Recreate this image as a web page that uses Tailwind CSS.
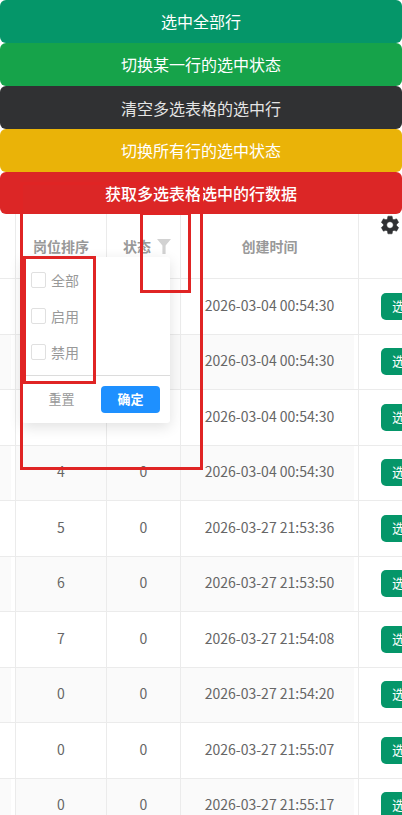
<!DOCTYPE html>
<html lang="zh-CN">
<head>
<meta charset="utf-8">
<script src="https://cdn.jsdelivr.net/npm/@tailwindcss/browser@4"></script>
<title>Table</title>
</head>
<body class="relative h-[815px] w-[402px] overflow-hidden bg-white font-['Noto_Sans_CJK_SC','Noto_Sans',sans-serif]">
<div class="flex flex-col text-center text-base text-white">
  <div class="flex h-[43px] items-center justify-center rounded-md bg-[#059669] pb-[2px]">选中全部行</div>
  <div class="flex h-[43px] items-center justify-center rounded-md bg-[#16a34a] pb-[2px]">切换某一行的选中状态</div>
  <div class="flex h-[43px] items-center justify-center rounded-md bg-[#303133] text-[#e4e4e4]">清空多选表格的选中行</div>
  <div class="flex h-[43px] items-center justify-center rounded-md bg-[#eab308] pb-[2px]">切换所有行的选中状态</div>
  <div class="flex h-[42px] items-center justify-center rounded-md bg-[#dc2626] font-medium">获取多选表格选中的行数据</div>
</div>

<div class="text-sm text-[#666666]">
  <div class="flex h-[65px] border-b border-[#ebebeb] font-bold text-[#999999]">
    <div class="w-[16px] border-r border-[#ebebeb]"></div>
    <div class="flex w-[91px] items-center justify-center border-r border-[#ebebeb]">岗位排序</div>
    <div class="flex w-[74px] items-center justify-start gap-[6px] border-r border-[#ebebeb] pl-[16px]">状态
      <svg class="h-[15px] w-[14px]" viewBox="0 0 14 15"><path fill="#d2d2d2" d="M0 0h14L8.6 6.5V15H5.4V6.5z"/></svg>
    </div>
    <div class="flex w-[178px] items-center justify-center border-r border-[#ebebeb]">创建时间</div>
    <div class="relative w-[43px]"><svg class="absolute top-[0px] left-[20px] h-[22px] w-[22px]" viewBox="0 0 24 24"><path fill="#303133" stroke="#303133" stroke-width="0.6" d="M19.14 12.94c.04-.3.06-.61.06-.94 0-.32-.02-.64-.07-.94l2.03-1.58a.49.49 0 0 0 .12-.61l-1.92-3.32a.488.488 0 0 0-.59-.22l-2.39.96c-.5-.38-1.03-.7-1.62-.94l-.36-2.54a.484.484 0 0 0-.48-.41h-3.84c-.24 0-.43.17-.47.41l-.36 2.54c-.59.24-1.13.57-1.62.94l-2.39-.96c-.22-.08-.47 0-.59.22L2.74 8.87c-.12.21-.08.47.12.61l2.03 1.58c-.05.3-.09.63-.09.94s.02.64.07.94l-2.03 1.58a.49.49 0 0 0-.12.61l1.92 3.32c.12.22.37.29.59.22l2.39-.96c.5.38 1.03.7 1.62.94l.36 2.54c.05.24.24.41.48.41h3.84c.24 0 .44-.17.47-.41l.36-2.54c.59-.24 1.13-.56 1.62-.94l2.39.96c.22.08.47 0 .59-.22l1.92-3.32c.12-.22.07-.47-.12-.61l-2.01-1.58zM12 15.6c-1.98 0-3.6-1.62-3.6-3.6s1.62-3.6 3.6-3.6 3.6 1.62 3.6 3.6-1.62 3.6-3.6 3.6z"/></svg></div>
  </div>

  <div class="flex h-[55.5px] items-stretch border-b border-[#ebebeb]">
    <div class="w-[16px] border-r border-[#ebebeb]"></div>
    <div class="w-[91px] border-r border-[#ebebeb]"></div>
    <div class="w-[74px] border-r border-[#ebebeb]"></div>
    <div class="flex w-[178px] items-center justify-center border-r border-[#ebebeb] pb-[3px]">2026-03-04 00:54:30</div>
    <div class="flex w-[43px] items-center overflow-hidden pl-[22px]"><span class="flex h-[27px] w-[60px] shrink-0 items-center rounded-[5px] bg-[#059669] pl-[11px] text-[13px] text-white">选中</span></div>
  </div>
  <div class="flex h-[55.5px] items-stretch border-b border-[#ebebeb] bg-[#fafafa]">
    <div class="w-[16px] border-r border-[#ebebeb] shadow-[inset_-4px_0_0_#fff]"></div>
    <div class="w-[91px] border-r border-[#ebebeb]"></div>
    <div class="w-[74px] border-r border-[#ebebeb]"></div>
    <div class="flex w-[178px] items-center justify-center border-r border-[#ebebeb] pb-[3px] shadow-[inset_-4px_0_0_#fff]">2026-03-04 00:54:30</div>
    <div class="flex w-[43px] items-center overflow-hidden bg-white pl-[22px]"><span class="flex h-[27px] w-[60px] shrink-0 items-center rounded-[5px] bg-[#059669] pl-[11px] text-[13px] text-white">选中</span></div>
  </div>
  <div class="flex h-[55.5px] items-stretch border-b border-[#ebebeb]">
    <div class="w-[16px] border-r border-[#ebebeb]"></div>
    <div class="w-[91px] border-r border-[#ebebeb]"></div>
    <div class="w-[74px] border-r border-[#ebebeb]"></div>
    <div class="flex w-[178px] items-center justify-center border-r border-[#ebebeb] pb-[3px]">2026-03-04 00:54:30</div>
    <div class="flex w-[43px] items-center overflow-hidden pl-[22px]"><span class="flex h-[27px] w-[60px] shrink-0 items-center rounded-[5px] bg-[#059669] pl-[11px] text-[13px] text-white">选中</span></div>
  </div>
  <div class="flex h-[55.5px] items-stretch border-b border-[#ebebeb] bg-[#fafafa]">
    <div class="w-[16px] border-r border-[#ebebeb] shadow-[inset_-4px_0_0_#fff]"></div>
    <div class="flex w-[91px] items-center justify-center border-r border-[#ebebeb] pb-[3px]">4</div>
    <div class="flex w-[74px] items-center justify-center border-r border-[#ebebeb] pb-[3px]">0</div>
    <div class="flex w-[178px] items-center justify-center border-r border-[#ebebeb] pb-[3px] shadow-[inset_-4px_0_0_#fff]">2026-03-04 00:54:30</div>
    <div class="flex w-[43px] items-center overflow-hidden bg-white pl-[22px]"><span class="flex h-[27px] w-[60px] shrink-0 items-center rounded-[5px] bg-[#059669] pl-[11px] text-[13px] text-white">选中</span></div>
  </div>
  <div class="flex h-[55.5px] items-stretch border-b border-[#ebebeb]">
    <div class="w-[16px] border-r border-[#ebebeb]"></div>
    <div class="flex w-[91px] items-center justify-center border-r border-[#ebebeb] pb-[3px]">5</div>
    <div class="flex w-[74px] items-center justify-center border-r border-[#ebebeb] pb-[3px]">0</div>
    <div class="flex w-[178px] items-center justify-center border-r border-[#ebebeb] pb-[3px]">2026-03-27 21:53:36</div>
    <div class="flex w-[43px] items-center overflow-hidden pl-[22px]"><span class="flex h-[27px] w-[60px] shrink-0 items-center rounded-[5px] bg-[#059669] pl-[11px] text-[13px] text-white">选中</span></div>
  </div>
  <div class="flex h-[55.5px] items-stretch border-b border-[#ebebeb] bg-[#fafafa]">
    <div class="w-[16px] border-r border-[#ebebeb] shadow-[inset_-4px_0_0_#fff]"></div>
    <div class="flex w-[91px] items-center justify-center border-r border-[#ebebeb] pb-[3px]">6</div>
    <div class="flex w-[74px] items-center justify-center border-r border-[#ebebeb] pb-[3px]">0</div>
    <div class="flex w-[178px] items-center justify-center border-r border-[#ebebeb] pb-[3px] shadow-[inset_-4px_0_0_#fff]">2026-03-27 21:53:50</div>
    <div class="flex w-[43px] items-center overflow-hidden bg-white pl-[22px]"><span class="flex h-[27px] w-[60px] shrink-0 items-center rounded-[5px] bg-[#059669] pl-[11px] text-[13px] text-white">选中</span></div>
  </div>
  <div class="flex h-[55.5px] items-stretch border-b border-[#ebebeb]">
    <div class="w-[16px] border-r border-[#ebebeb]"></div>
    <div class="flex w-[91px] items-center justify-center border-r border-[#ebebeb] pb-[3px]">7</div>
    <div class="flex w-[74px] items-center justify-center border-r border-[#ebebeb] pb-[3px]">0</div>
    <div class="flex w-[178px] items-center justify-center border-r border-[#ebebeb] pb-[3px]">2026-03-27 21:54:08</div>
    <div class="flex w-[43px] items-center overflow-hidden pl-[22px]"><span class="flex h-[27px] w-[60px] shrink-0 items-center rounded-[5px] bg-[#059669] pl-[11px] text-[13px] text-white">选中</span></div>
  </div>
  <div class="flex h-[55.5px] items-stretch border-b border-[#ebebeb] bg-[#fafafa]">
    <div class="w-[16px] border-r border-[#ebebeb] shadow-[inset_-4px_0_0_#fff]"></div>
    <div class="flex w-[91px] items-center justify-center border-r border-[#ebebeb] pb-[3px]">0</div>
    <div class="flex w-[74px] items-center justify-center border-r border-[#ebebeb] pb-[3px]">0</div>
    <div class="flex w-[178px] items-center justify-center border-r border-[#ebebeb] pb-[3px] shadow-[inset_-4px_0_0_#fff]">2026-03-27 21:54:20</div>
    <div class="flex w-[43px] items-center overflow-hidden bg-white pl-[22px]"><span class="flex h-[27px] w-[60px] shrink-0 items-center rounded-[5px] bg-[#059669] pl-[11px] text-[13px] text-white">选中</span></div>
  </div>
  <div class="flex h-[55.5px] items-stretch border-b border-[#ebebeb]">
    <div class="w-[16px] border-r border-[#ebebeb]"></div>
    <div class="flex w-[91px] items-center justify-center border-r border-[#ebebeb] pb-[3px]">0</div>
    <div class="flex w-[74px] items-center justify-center border-r border-[#ebebeb] pb-[3px]">0</div>
    <div class="flex w-[178px] items-center justify-center border-r border-[#ebebeb] pb-[3px]">2026-03-27 21:55:07</div>
    <div class="flex w-[43px] items-center overflow-hidden pl-[22px]"><span class="flex h-[27px] w-[60px] shrink-0 items-center rounded-[5px] bg-[#059669] pl-[11px] text-[13px] text-white">选中</span></div>
  </div>
  <div class="flex h-[55.5px] items-stretch border-b border-[#ebebeb] bg-[#fafafa]">
    <div class="w-[16px] border-r border-[#ebebeb] shadow-[inset_-4px_0_0_#fff]"></div>
    <div class="flex w-[91px] items-center justify-center border-r border-[#ebebeb] pb-[3px]">0</div>
    <div class="flex w-[74px] items-center justify-center border-r border-[#ebebeb] pb-[3px]">0</div>
    <div class="flex w-[178px] items-center justify-center border-r border-[#ebebeb] pb-[3px] shadow-[inset_-4px_0_0_#fff]">2026-03-27 21:55:17</div>
    <div class="flex w-[43px] items-center overflow-hidden bg-white pl-[22px]"><span class="flex h-[27px] w-[60px] shrink-0 items-center rounded-[5px] bg-[#059669] pl-[11px] text-[13px] text-white">选中</span></div>
  </div>
</div>

<!-- filter dropdown -->
<div class="absolute top-[257px] left-[22px] flex h-[166px] w-[148px] flex-col rounded-[3px] bg-white text-sm text-[#999999] shadow-[0_4px_14px_rgba(0,0,0,0.12)]">
  <div class="flex h-[119px] flex-col gap-[12px] border-b border-[#dcdcdc] pt-[11px] pl-[9px]">
    <div class="flex h-[24px] items-center gap-[5px]"><span class="h-[16px] w-[15px] rounded-[2px] border border-[#e0e0e0]"></span>全部</div>
    <div class="flex h-[24px] items-center gap-[5px]"><span class="h-[16px] w-[15px] rounded-[2px] border border-[#e0e0e0]"></span>启用</div>
    <div class="flex h-[24px] items-center gap-[5px]"><span class="h-[16px] w-[15px] rounded-[2px] border border-[#e0e0e0]"></span>禁用</div>
  </div>
  <div class="flex items-center pt-[10px]">
    <span class="w-[79px] text-center text-[13px] text-[#999999]">重置</span>
    <span class="flex h-[27px] w-[59px] items-center justify-center rounded-[4px] bg-[#1e90ff] text-[13px] font-bold text-white">确定</span>
  </div>
</div>

<!-- red annotation boxes -->
<div class="absolute top-[182px] left-[20px] h-[288px] w-[183px] border-[3px] border-[#e02424]"></div>
<div class="absolute top-[212px] left-[140px] h-[81px] w-[51px] border-[3px] border-[#e02424]"></div>
<div class="absolute top-[256px] left-[23px] h-[128px] w-[73px] border-[3px] border-[#e02424]"></div>
</body>
</html>
